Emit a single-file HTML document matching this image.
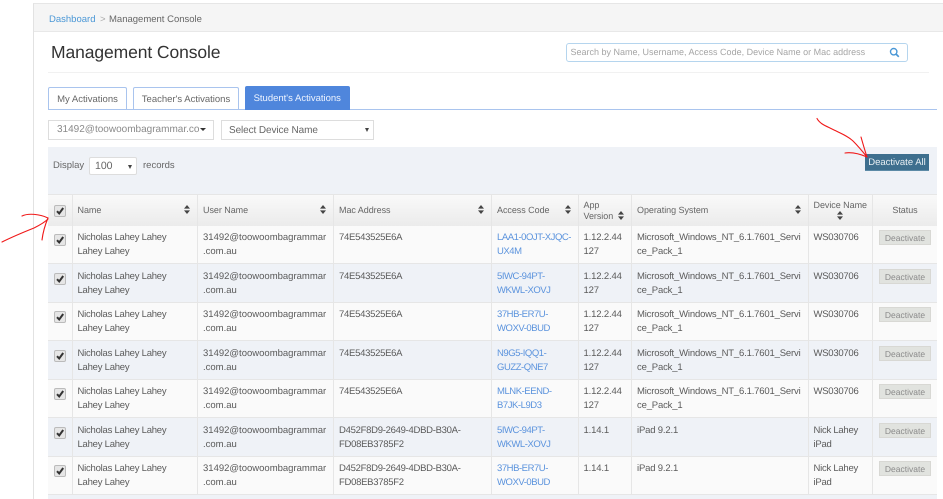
<!DOCTYPE html>
<html><head><meta charset="utf-8"><style>
html,body{margin:0;padding:0;background:#fff}
body{width:943px;height:499px;overflow:hidden;position:relative;font-family:"Liberation Sans",sans-serif;color:#555;text-rendering:geometricPrecision}
#w{position:absolute;left:0;top:0;width:943px;height:499px;filter:blur(.3px);overflow:hidden}
.a{position:absolute;white-space:nowrap}
.tab{position:absolute;top:87px;height:21px;border:1px solid #a9c4ee;border-bottom:0;border-radius:2px 2px 0 0;font-size:9.5px;line-height:23px;text-align:center;color:#666;background:#fff}
.sel{position:absolute;background:#fff;border:1px solid #ddd;box-sizing:border-box;font-size:10px;color:#777}
.r{position:absolute;left:48px;width:889px;height:38.5px;display:flex;border-bottom:1px solid #e6e6e6;box-sizing:border-box;font-size:9.5px;line-height:14px;color:#5a5a5a}
.r>div{box-sizing:border-box;border-right:1px solid #e6e6e6;padding:5.500px 0 0 5px;white-space:nowrap;position:relative;flex:none}
.o{background:#fafafa}.e{background:#eff2f7}
.c0{width:24.5px}.c1{width:125.5px}.c2{width:136px}.c3{width:158px}.c4{width:86.5px}.c5{width:53.5px}.c6{width:176.5px}.c7{width:64px}.c8{width:65px}
.r .c1{letter-spacing:-.23px}.r .c3{letter-spacing:-.28px}.r .c4{letter-spacing:-.45px}.r .c5{letter-spacing:-.15px}.r .c6{letter-spacing:-.17px}.r .c7{letter-spacing:-.25px}
.cb{position:absolute;left:6px;top:8.5px;width:10px;height:10px;border:1px solid #bbb;border-radius:2px;background:#e6e6e6}
.cb svg{position:absolute;left:0;top:0}
a{color:#5b93dd;text-decoration:none}
.b{position:absolute;left:6.5px;top:4.5px;width:52px;height:15px;box-sizing:border-box;background:#e1e3df;border:1px solid #d8d8d4;font-size:8.5px;letter-spacing:0;line-height:14px;text-align:center;color:#8a8a8a}
.h{position:absolute;left:48px;top:194px;width:889px;height:31.5px;display:flex;box-sizing:border-box;border-top:1px solid #e6e6e6;background:linear-gradient(#f9f9f9,#ebebeb);font-size:9px;letter-spacing:-.05px;line-height:10.5px;color:#666}
.h>div{box-sizing:border-box;border-right:1px solid #e6e6e6;padding:10px 0 0 5px;white-space:nowrap;position:relative;flex:none}
.s{position:absolute;width:6px;height:9px}
</style></head><body><div id="w">

<div class="a" style="left:33px;top:3px;width:910px;height:496px;border-left:1px solid #e2e2e2;border-top:1px solid #e6e6e6;box-sizing:border-box"></div>
<div class="a" style="left:34px;top:4px;width:909px;height:28px;background:#f5f5f5;border-bottom:1px solid #e8e8e8;box-sizing:border-box"></div>
<div class="a" style="left:49px;top:14px;font-size:9.5px;line-height:12px;color:#4a97d6">Dashboard</div>
<div class="a" style="left:100px;top:14px;font-size:9.5px;line-height:12px;color:#aaa">&gt;</div>
<div class="a" style="left:109px;top:14px;font-size:9.5px;line-height:12px;color:#666">Management Console</div>

<div class="a" style="left:51px;top:41px;font-size:17.500px;letter-spacing:-.1px;line-height:22px;color:#333">Management Console</div>
<div class="a" style="left:565.5px;top:42.5px;width:342px;height:19px;box-sizing:border-box;border:1px solid #b5d5ee;border-radius:3px;background:#fff"></div>
<div class="a" style="left:570.5px;top:46px;font-size:9px;line-height:12px;color:#a5a5a5">Search by Name, Username, Access Code, Device Name or Mac address</div>
<svg class="a" style="left:889px;top:47px" width="11" height="11" viewBox="0 0 11 11"><circle cx="4.7" cy="4.7" r="3.2" fill="none" stroke="#4a97d6" stroke-width="1.4"/><path d="M7 7l2.8 2.8" stroke="#4a97d6" stroke-width="1.7"/></svg>
<div class="a" style="left:48px;top:72px;width:881px;height:1px;background:#f1f1f1"></div>

<div class="a" style="left:48px;top:109px;width:889px;height:1px;background:#a9c4ee"></div>
<div class="tab" style="left:48px;width:77px">My Activations</div>
<div class="tab" style="left:133px;width:104px">Teacher's Activations</div>
<div class="tab" style="left:245px;top:86px;width:102.5px;height:23px;background:#4f86dc;border-color:#4f86dc;color:#eef4ff;line-height:24px">Student's Activations</div>

<div class="sel" style="left:48px;top:120px;width:166px;height:20px;line-height:18px;padding-left:8px;color:#8a8a8a">31492@toowoombagrammar.co</div>
<div class="a" style="left:200px;top:128px;border:3px solid transparent;border-top:3.5px solid #333;border-bottom:0"></div>
<div class="sel" style="left:221px;top:120px;width:153px;height:20px;line-height:19px;padding-left:7px;letter-spacing:-.1px;color:#666">Select Device Name</div>
<div class="a" style="left:364.5px;top:128px;border:2.5px solid transparent;border-top:4px solid #444;border-bottom:0"></div>

<div class="a" style="left:48px;top:147px;width:889px;height:47px;background:#eff2f7"></div>
<div class="a" style="left:53px;top:159.500px;font-size:9.5px;line-height:12px;color:#666">Display</div>
<div class="sel" style="left:89px;top:157px;width:48px;height:18px;line-height:16px;padding-left:5px;border-radius:2px;font-size:10.5px;color:#666">100</div>
<div class="a" style="left:127.5px;top:165px;border:2.5px solid transparent;border-top:4px solid #444;border-bottom:0"></div>
<div class="a" style="left:143px;top:159.500px;font-size:9.5px;line-height:12px;color:#666">records</div>
<div class="a" style="left:865px;top:153.5px;width:64px;height:17.5px;background:#3e6f8e;border-bottom:1px solid #5c8aa6;box-sizing:border-box;font-size:9.5px;line-height:17.500px;text-align:center;color:#eaf1f5">Deactivate All</div>

<div class="h">
<div class="c0"><span class="cb" style="top:9.5px"><svg width="10" height="10" viewBox="0 0 10 10"><path d="M2 5.2l2.2 2.3L8.2 2" fill="none" stroke="#333" stroke-width="2"/></svg></span></div>
<div class="c1">Name<svg class="s" style="right:7px;top:10px" viewBox="0 0 6 9"><path d="M3 0l3 3.6H0zM3 9l3-3.6H0z" fill="#444"/></svg></div>
<div class="c2">User Name<svg class="s" style="right:7px;top:10px" viewBox="0 0 6 9"><path d="M3 0l3 3.6H0zM3 9l3-3.6H0z" fill="#444"/></svg></div>
<div class="c3">Mac Address<svg class="s" style="right:7px;top:10px" viewBox="0 0 6 9"><path d="M3 0l3 3.6H0zM3 9l3-3.6H0z" fill="#444"/></svg></div>
<div class="c4">Access Code<svg class="s" style="right:7px;top:10px" viewBox="0 0 6 9"><path d="M3 0l3 3.6H0zM3 9l3-3.6H0z" fill="#444"/></svg></div>
<div class="c5" style="padding-top:5px">App<br>Version<svg class="s" style="right:7px;top:15.500px" viewBox="0 0 6 9"><path d="M3 0l3 3.6H0zM3 9l3-3.6H0z" fill="#444"/></svg></div>
<div class="c6">Operating System<svg class="s" style="right:7px;top:10px" viewBox="0 0 6 9"><path d="M3 0l3 3.6H0zM3 9l3-3.6H0z" fill="#444"/></svg></div>
<div class="c7" style="padding-top:5px">Device Name<svg class="s" style="left:50%;margin-left:-3px;top:15.500px" viewBox="0 0 6 9"><path d="M3 0l3 3.6H0zM3 9l3-3.6H0z" fill="#444"/></svg></div>
<div class="c8" style="text-align:center;padding-left:0;border-right:0">Status</div>
</div>

<div class="r o" style="top:225.5px"><div class="c0"><span class="cb"><svg width="10" height="10" viewBox="0 0 10 10"><path d="M2 5.2l2.2 2.3L8.2 2" fill="none" stroke="#333" stroke-width="2"/></svg></span></div><div class="c1">Nicholas Lahey Lahey<br>Lahey Lahey</div><div class="c2">31492@toowoombagrammar<br>.com.au</div><div class="c3">74E543525E6A</div><div class="c4"><a>LAA1-0OJT-XJQC-<br>UX4M</a></div><div class="c5">1.12.2.44<br>127</div><div class="c6">Microsoft_Windows_NT_6.1.7601_Servi<br>ce_Pack_1</div><div class="c7">WS030706</div><div class="c8" style="border:0"><span class="b">Deactivate</span></div></div>

<div class="r e" style="top:264px"><div class="c0"><span class="cb"><svg width="10" height="10" viewBox="0 0 10 10"><path d="M2 5.2l2.2 2.3L8.2 2" fill="none" stroke="#333" stroke-width="2"/></svg></span></div><div class="c1">Nicholas Lahey Lahey<br>Lahey Lahey</div><div class="c2">31492@toowoombagrammar<br>.com.au</div><div class="c3">74E543525E6A</div><div class="c4"><a>5IWC-94PT-<br>WKWL-XOVJ</a></div><div class="c5">1.12.2.44<br>127</div><div class="c6">Microsoft_Windows_NT_6.1.7601_Servi<br>ce_Pack_1</div><div class="c7">WS030706</div><div class="c8" style="border:0"><span class="b">Deactivate</span></div></div>

<div class="r o" style="top:302.5px"><div class="c0"><span class="cb"><svg width="10" height="10" viewBox="0 0 10 10"><path d="M2 5.2l2.2 2.3L8.2 2" fill="none" stroke="#333" stroke-width="2"/></svg></span></div><div class="c1">Nicholas Lahey Lahey<br>Lahey Lahey</div><div class="c2">31492@toowoombagrammar<br>.com.au</div><div class="c3">74E543525E6A</div><div class="c4"><a>37HB-ER7U-<br>WOXV-0BUD</a></div><div class="c5">1.12.2.44<br>127</div><div class="c6">Microsoft_Windows_NT_6.1.7601_Servi<br>ce_Pack_1</div><div class="c7">WS030706</div><div class="c8" style="border:0"><span class="b">Deactivate</span></div></div>

<div class="r e" style="top:341px"><div class="c0"><span class="cb"><svg width="10" height="10" viewBox="0 0 10 10"><path d="M2 5.2l2.2 2.3L8.2 2" fill="none" stroke="#333" stroke-width="2"/></svg></span></div><div class="c1">Nicholas Lahey Lahey<br>Lahey Lahey</div><div class="c2">31492@toowoombagrammar<br>.com.au</div><div class="c3">74E543525E6A</div><div class="c4"><a>N9G5-IQQ1-<br>GUZZ-QNE7</a></div><div class="c5">1.12.2.44<br>127</div><div class="c6">Microsoft_Windows_NT_6.1.7601_Servi<br>ce_Pack_1</div><div class="c7">WS030706</div><div class="c8" style="border:0"><span class="b">Deactivate</span></div></div>

<div class="r o" style="top:379.5px"><div class="c0"><span class="cb"><svg width="10" height="10" viewBox="0 0 10 10"><path d="M2 5.2l2.2 2.3L8.2 2" fill="none" stroke="#333" stroke-width="2"/></svg></span></div><div class="c1">Nicholas Lahey Lahey<br>Lahey Lahey</div><div class="c2">31492@toowoombagrammar<br>.com.au</div><div class="c3">74E543525E6A</div><div class="c4"><a>MLNK-EEND-<br>B7JK-L9D3</a></div><div class="c5">1.12.2.44<br>127</div><div class="c6">Microsoft_Windows_NT_6.1.7601_Servi<br>ce_Pack_1</div><div class="c7">WS030706</div><div class="c8" style="border:0"><span class="b">Deactivate</span></div></div>

<div class="r e" style="top:418px"><div class="c0"><span class="cb"><svg width="10" height="10" viewBox="0 0 10 10"><path d="M2 5.2l2.2 2.3L8.2 2" fill="none" stroke="#333" stroke-width="2"/></svg></span></div><div class="c1">Nicholas Lahey Lahey<br>Lahey Lahey</div><div class="c2">31492@toowoombagrammar<br>.com.au</div><div class="c3">D452F8D9-2649-4DBD-B30A-<br>FD08EB3785F2</div><div class="c4"><a>5IWC-94PT-<br>WKWL-XOVJ</a></div><div class="c5">1.14.1</div><div class="c6">iPad 9.2.1</div><div class="c7">Nick Lahey<br>iPad</div><div class="c8" style="border:0"><span class="b">Deactivate</span></div></div>

<div class="r o" style="top:456.5px"><div class="c0"><span class="cb"><svg width="10" height="10" viewBox="0 0 10 10"><path d="M2 5.2l2.2 2.3L8.2 2" fill="none" stroke="#333" stroke-width="2"/></svg></span></div><div class="c1">Nicholas Lahey Lahey<br>Lahey Lahey</div><div class="c2">31492@toowoombagrammar<br>.com.au</div><div class="c3">D452F8D9-2649-4DBD-B30A-<br>FD08EB3785F2</div><div class="c4"><a>37HB-ER7U-<br>WOXV-0BUD</a></div><div class="c5">1.14.1</div><div class="c6">iPad 9.2.1</div><div class="c7">Nick Lahey<br>iPad</div><div class="c8" style="border:0"><span class="b">Deactivate</span></div></div>

<div class="a" style="left:48px;top:495px;width:889px;height:4px;background:#eff2f7"></div>

<svg class="a" style="left:0;top:0" width="943" height="499" viewBox="0 0 943 499" fill="none" stroke="#f01818" stroke-width="1.1" stroke-linecap="round" stroke-linejoin="round">
<path d="M817 118.500C820 124 826 126 832 129C840 133 848 136 853 141C858 146 863 152 867 157"/>
<path d="M861 137C863 144 865 151 867 157"/>
<path d="M845 153C852 152 860 154 867 157"/>
<path d="M2 242C12 237 24 232 34 228C40 225 45 222 48 219"/>
<path d="M22 216C28 213 40 214 48 218"/>
<path d="M42 240C43 232 45 225 48 218"/>
</svg>
</div></body></html>
